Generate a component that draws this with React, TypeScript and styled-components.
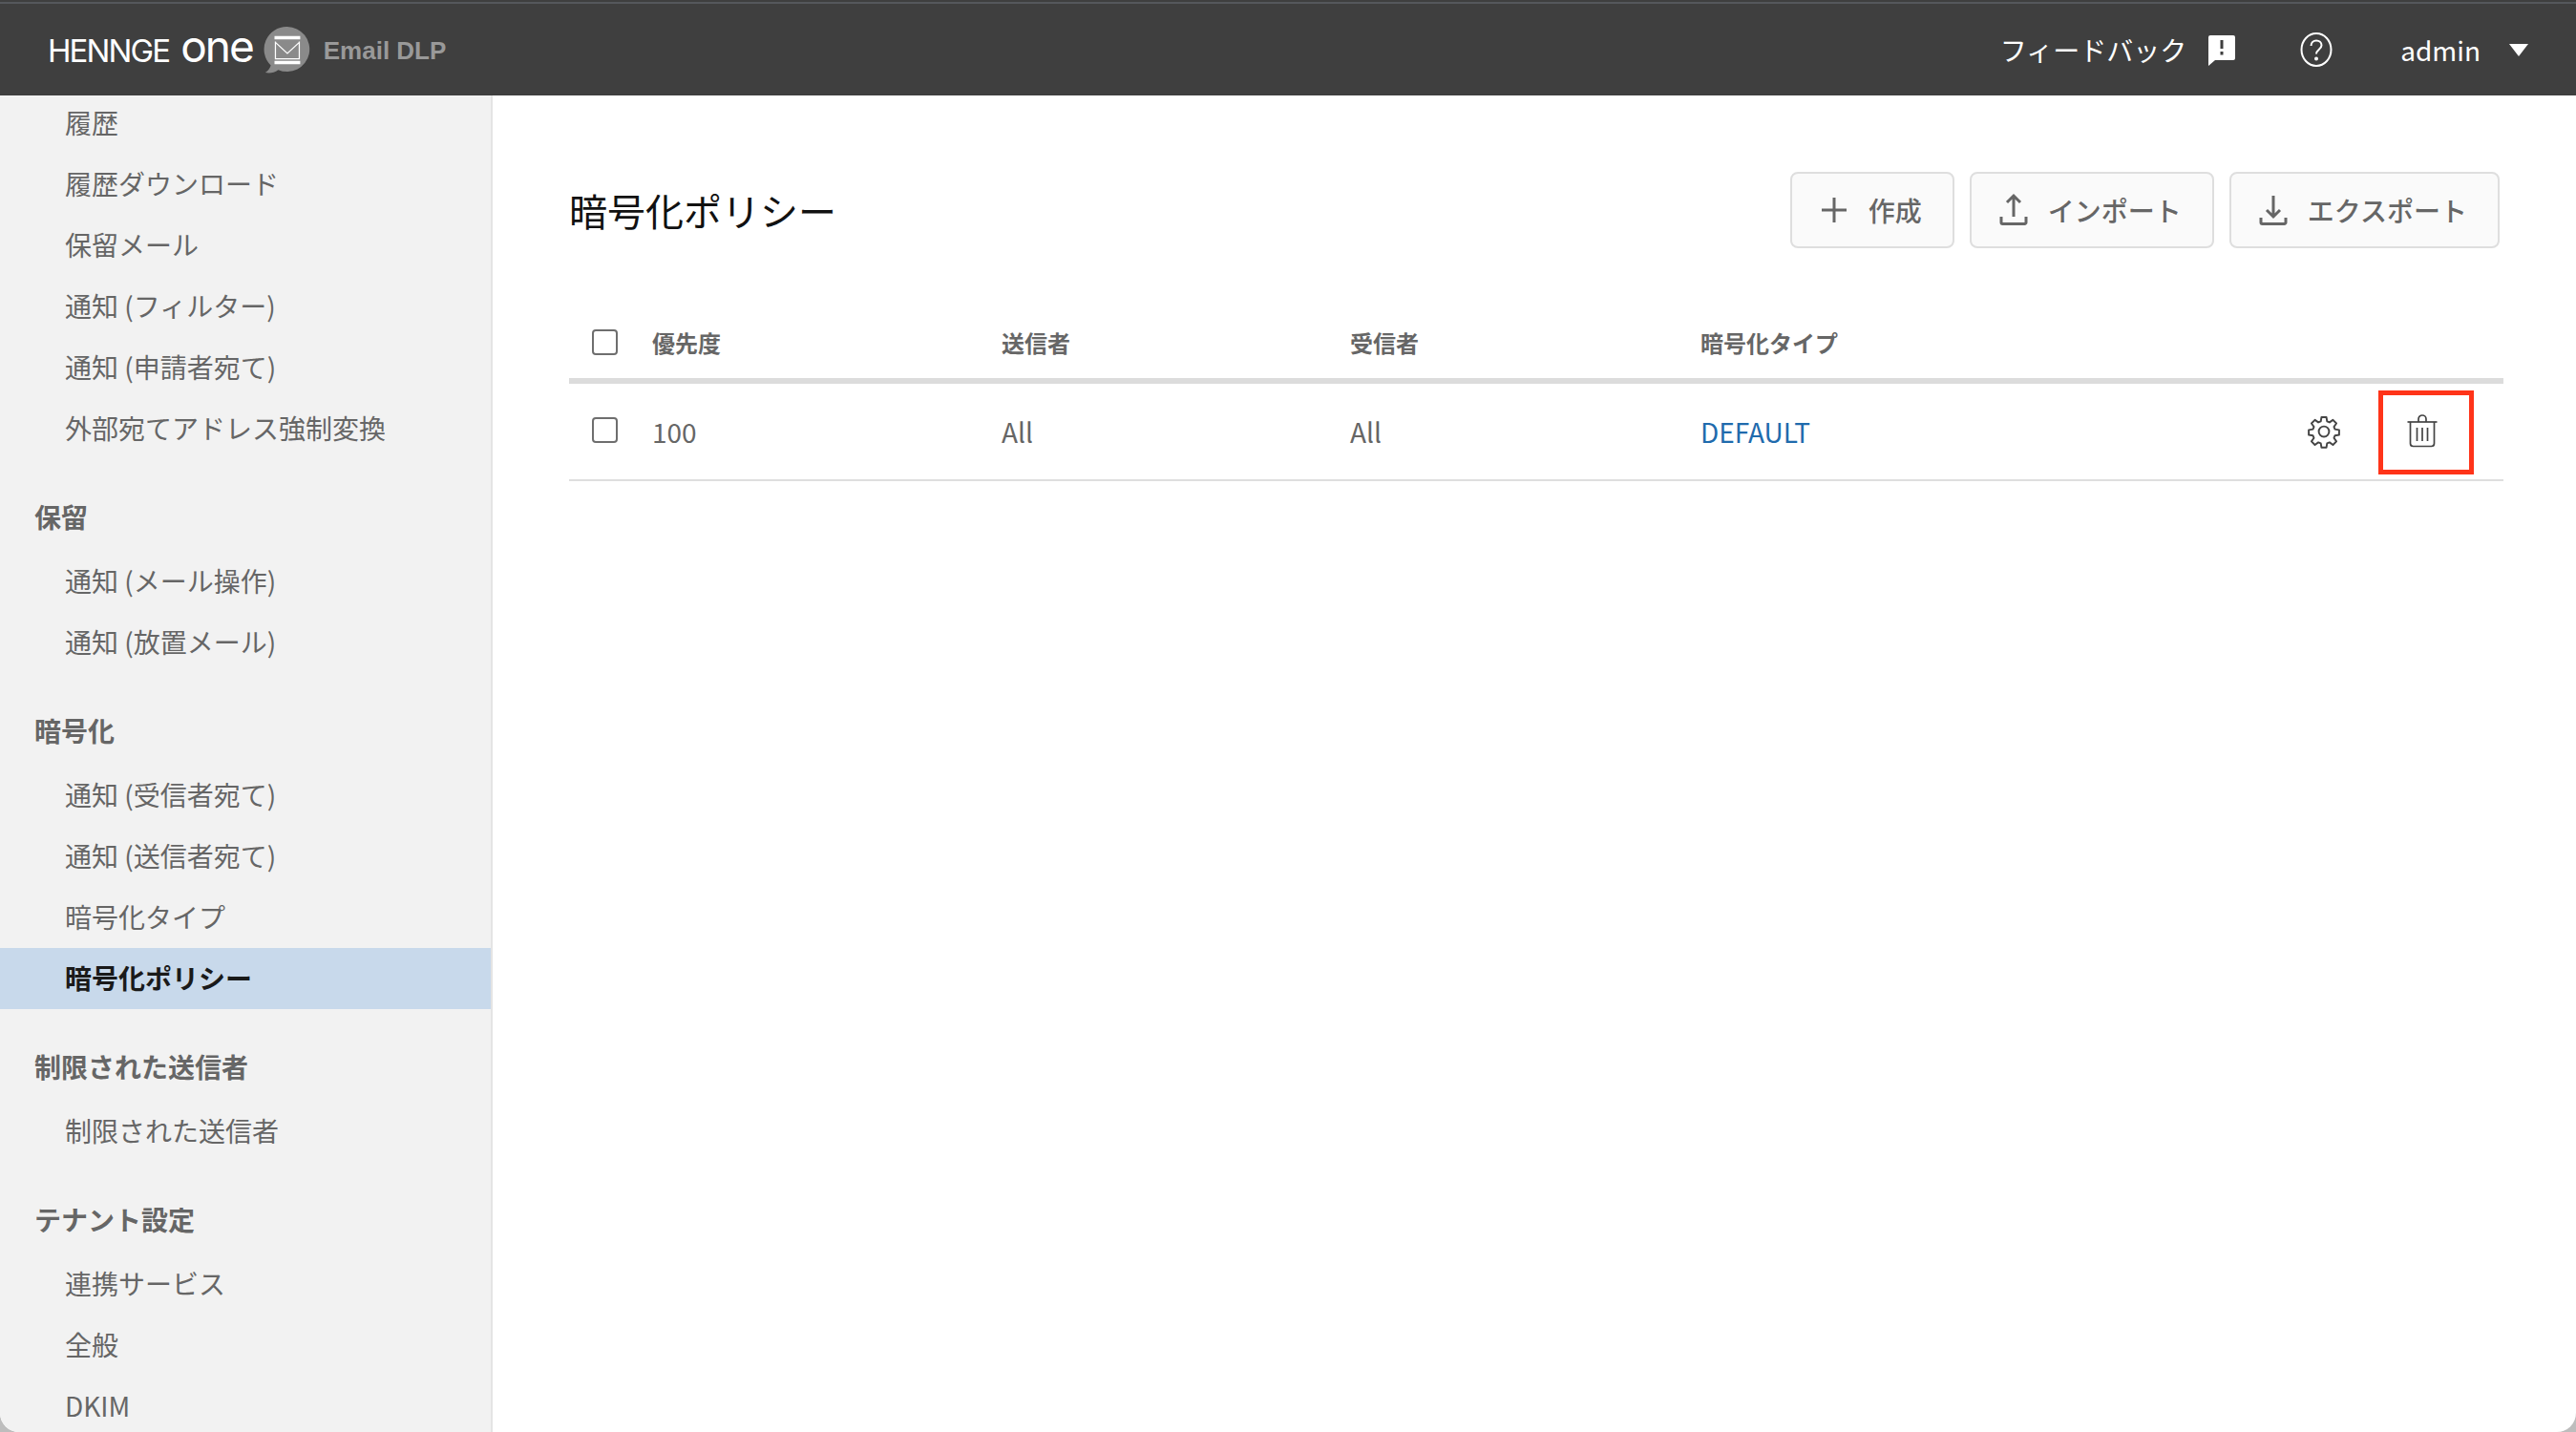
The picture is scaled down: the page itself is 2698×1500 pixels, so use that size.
import React from 'react';
import styled, { createGlobalStyle } from 'styled-components';

const Global = createGlobalStyle`
  html, body { margin: 0; padding: 0; background: #bdbdbd; }
  body { font-family: "Noto Sans CJK JP", "Noto Sans", sans-serif; }
  * { box-sizing: border-box; }
`;

const Screen = styled.div`
  width: 2698px;
  height: 1500px;
  display: flex;
  flex-direction: column;
  overflow: hidden;
  background: #fff;
  border-radius: 0 0 20px 20px;
`;

const TopBar = styled.header`
  flex: 0 0 100px;
  display: flex;
  align-items: center;
  background: #3f3f3f;
  border-top: 2px solid #3f3f3f;
  box-shadow: inset 0 2px 0 #55585c;
  padding: 2px 50px 0 50px;
  position: relative;
  z-index: 1;
`;

const Logo = styled.div`
  display: flex;
  align-items: center;
  margin-top: 2px;
`;

const Wordmark = styled.span`
  display: inline-block;
  white-space: nowrap;
  font-family: "Inter", "Liberation Sans", sans-serif;
  color: #fff;
  line-height: 50px;
`;

const Hennge = styled.span`
  font-size: 33px;
  letter-spacing: -1.9px;
`;

const One = styled.span`
  font-size: 46px;
  letter-spacing: -2px;
  margin-left: 12px;
`;

const Emblem = styled.svg`
  width: 50px;
  height: 52px;
  margin-left: 10px;
  flex: none;
`;

const Product = styled.span`
  font-family: "Liberation Sans", sans-serif;
  font-size: 26px;
  font-weight: 700;
  letter-spacing: 0;
  color: #999;
  margin-left: 14px;
`;

const TopActions = styled.div`
  margin-left: auto;
  display: flex;
  align-items: center;
  color: #fff;
`;

const FeedbackLabel = styled.span`
  font-size: 28px;
  line-height: 40px;
`;

const FeedbackIcon = styled.svg`
  width: 30px;
  height: 34px;
  margin-left: 22px;
`;

const HelpIcon = styled.svg`
  width: 34px;
  height: 36px;
  margin-left: 67px;
`;

const UserName = styled.span`
  font-size: 28px;
  line-height: 40px;
  margin-left: 71px;
`;

const Caret = styled.span`
  width: 0;
  height: 0;
  margin-left: 30px;
  border-left: 10px solid transparent;
  border-right: 10px solid transparent;
  border-top: 13px solid #fff;
`;

const Body = styled.div`
  flex: 1;
  display: flex;
  min-height: 0;
`;

const Sidebar = styled.nav`
  flex: 0 0 516px;
  background: #f2f2f2;
  border-right: 2px solid #e4e4e4;
  overflow: hidden;
`;

const NavList = styled.div`
  margin-top: -3px;
`;

const GroupTitle = styled.div`
  height: 96px;
  padding: 39px 0 15px 36px;
  font-size: 28px;
  line-height: 42px;
  font-weight: 700;
  color: #666;
`;

const NavItem = styled.a<{ $active?: boolean }>`
  display: block;
  height: 64px;
  padding-left: 68px;
  font-size: 28px;
  line-height: 62px;
  white-space: nowrap;
  font-weight: ${p => (p.$active ? 700 : 400)};
  color: ${p => (p.$active ? '#1a1a1a' : '#666')};
  background: ${p => (p.$active ? '#c8d9eb' : 'transparent')};
  margin-right: -1px;
`;

const Main = styled.main`
  flex: 1;
  padding: 80px 76px 0 80px;
  min-width: 0;
`;

const PageHead = styled.div`
  display: flex;
  align-items: center;
  justify-content: space-between;
  height: 80px;
  padding-right: 4px;
`;

const Title = styled.h1`
  margin: 0;
  font-size: 40px;
  line-height: 60px;
  font-weight: 400;
  color: #111;
`;

const Toolbar = styled.div`
  display: flex;
  gap: 16px;
`;

const ToolButton = styled.button`
  height: 80px;
  display: flex;
  align-items: center;
  gap: 21px;
  padding: 0 32px 0 29px;
  background: #fafafa;
  border: 2px solid #dedede;
  border-radius: 8px;
  color: #666;
  font-family: inherit;
  font-size: 28px;
  font-weight: 500;
  white-space: nowrap;
`;

const ToolIcon = styled.svg`
  width: 30px;
  height: 36px;
  flex: none;
`;

const Row = styled.div<{ $head?: boolean }>`
  display: grid;
  grid-template-columns: 87px 366px 365px 367px 1fr;
  align-items: center;
  height: ${p => (p.$head ? '81px' : '102px')};
  margin-top: ${p => (p.$head ? '61px' : '0')};
  border-bottom: ${p => (p.$head ? '6px solid #dcdcdc' : '2px solid #dedede')};
  color: #666;
  font-size: ${p => (p.$head ? '24px' : '28px')};
  font-weight: ${p => (p.$head ? 700 : 400)};
`;

const CheckCell = styled.div<{ $lift?: boolean }>`
  padding-left: 24px;
  padding-bottom: ${p => (p.$lift ? '3px' : '0')};
  display: flex;
`;

const Check = styled.span`
  width: 27px;
  height: 27px;
  border: 2px solid #6e6e6e;
  border-radius: 4px;
  background: #fff;
`;

const Cell = styled.div`
  white-space: nowrap;
`;

const Link = styled.a`
  color: #1f6bad;
`;

const EndWrap = styled.div`
  display: flex;
  align-items: center;
  justify-content: space-between;
`;

const RowActions = styled.div`
  display: flex;
  align-items: center;
  justify-content: flex-end;
  padding-right: 31px;
`;

const ActionIcon = styled.svg`
  width: 36px;
  height: 36px;
  color: #444;
`;

const DangerFrame = styled.div`
  width: 100px;
  height: 88px;
  margin: 2px 0 0 39px;
  border: 5px solid #ff3419;
  display: flex;
  align-items: center;
  justify-content: center;
  padding: 0 8px 3px 0;
`;

const groups: { title?: string; items: string[] }[] = [
  { items: ['履歴', '履歴ダウンロード', '保留メール', '通知 (フィルター)', '通知 (申請者宛て)', '外部宛てアドレス強制変換'] },
  { title: '保留', items: ['通知 (メール操作)', '通知 (放置メール)'] },
  { title: '暗号化', items: ['通知 (受信者宛て)', '通知 (送信者宛て)', '暗号化タイプ', '暗号化ポリシー'] },
  { title: '制限された送信者', items: ['制限された送信者'] },
  { title: 'テナント設定', items: ['連携サービス', '全般', 'DKIM'] },
];

const Gear = () => (
  <ActionIcon viewBox="0 0 24 24" fill="none" stroke="currentColor" strokeWidth="1.3" strokeLinejoin="round">
    <circle cx="12" cy="12" r="3.6" />
    <path d="M10.3 2h3.4l.5 2.9 1.7.7 2.4-1.7 2.4 2.4-1.7 2.4.7 1.7 2.9.5v3.4l-2.9.5-.7 1.7 1.7 2.4-2.4 2.4-2.4-1.7-1.7.7-.5 2.9h-3.4l-.5-2.9-1.7-.7-2.4 1.7-2.4-2.4 1.7-2.4-.7-1.7-2.9-.5v-3.4l2.9-.5.7-1.7-1.7-2.4 2.4-2.4 2.4 1.7 1.7-.7z" />
  </ActionIcon>
);

const Trash = () => (
  <ActionIcon viewBox="0 0 36 36" fill="none" stroke="currentColor" strokeWidth="1.7">
    <path d="M2.500 8h31" />
    <path d="M14 8V5a4 4 0 0 1 8 0v3" />
    <path d="M5.500 8v22.500a3 3 0 0 0 3 3h19a3 3 0 0 0 3-3V8" />
    <path d="M12.500 14v14M18 14v14M23.500 14v14" />
  </ActionIcon>
);

export default function App() {
  return (
    <Screen>
      <Global />
      <TopBar>
        <Logo>
          <Wordmark>
            <Hennge>HENNGE</Hennge>
            <One>one</One>
          </Wordmark>
          <Emblem viewBox="0 0 52 54">
            <path d="M27 1a24.500 24.500 0 1 1-10 47c-4 3-9 4-14 3 3-2 5-5 6-8A24.500 24.500 0 0 1 27 1z" fill="#8a8a8a" />
            <path d="M13 13h28M13 40h28" stroke="#fff" strokeWidth="3.500" />
            <path d="M14 17v19h26V17M14 18l13 12 13-12" stroke="#fff" strokeWidth="1.300" fill="none" />
          </Emblem>
          <Product>Email DLP</Product>
        </Logo>
        <TopActions>
          <FeedbackLabel>フィードバック</FeedbackLabel>
          <FeedbackIcon viewBox="0 0 30 34">
            <path d="M3 2h24a2 2 0 0 1 2 2v22a2 2 0 0 1-2 2H8l-7 6V4a2 2 0 0 1 2-2z" fill="#fff" />
            <rect x="13.500" y="7" width="3" height="9" fill="#3f3f3f" />
            <rect x="13.500" y="19" width="3" height="3.500" fill="#3f3f3f" />
          </FeedbackIcon>
          <HelpIcon viewBox="0 0 34 36" fill="none" stroke="#fff" strokeWidth="2">
            <ellipse cx="17" cy="18" rx="15.500" ry="17" />
            <path d="M11.500 14c0-3.500 2.500-5.500 5.500-5.500s5.500 2 5.500 5c0 4-5.500 4.500-5.500 9" />
            <circle cx="17" cy="27.500" r="1" fill="#fff" />
          </HelpIcon>
          <UserName>admin</UserName>
          <Caret />
        </TopActions>
      </TopBar>
      <Body>
        <Sidebar>
          <NavList>
            {groups.map((g, i) => (
              <div key={i}>
                {g.title && <GroupTitle>{g.title}</GroupTitle>}
                {g.items.map(item => (
                  <NavItem key={item} $active={item === '暗号化ポリシー'}>{item}</NavItem>
                ))}
              </div>
            ))}
          </NavList>
        </Sidebar>
        <Main>
          <PageHead>
            <Title>暗号化ポリシー</Title>
            <Toolbar>
              <ToolButton>
                <ToolIcon viewBox="0 0 30 36" fill="none" stroke="#666" strokeWidth="3">
                  <path d="M15 5v26M2 18h26" />
                </ToolIcon>
                作成
              </ToolButton>
              <ToolButton>
                <ToolIcon viewBox="0 0 30 36" fill="none" stroke="#666" strokeWidth="3">
                  <path d="M15 25V3M8 10l7-7 7 7M2 25v6a1.500 1.500 0 0 0 1.500 1.500h23A1.500 1.500 0 0 0 28 31v-6" />
                </ToolIcon>
                インポート
              </ToolButton>
              <ToolButton>
                <ToolIcon viewBox="0 0 30 36" fill="none" stroke="#666" strokeWidth="3">
                  <path d="M15 3v22M8 18l7 7 7-7M2 26v5a1.500 1.500 0 0 0 1.500 1.500h23A1.500 1.500 0 0 0 28 31v-5" />
                </ToolIcon>
                エクスポート
              </ToolButton>
            </Toolbar>
          </PageHead>
          <Row $head>
            <CheckCell><Check /></CheckCell>
            <Cell>優先度</Cell>
            <Cell>送信者</Cell>
            <Cell>受信者</Cell>
            <Cell>暗号化タイプ</Cell>
          </Row>
          <Row>
            <CheckCell $lift><Check /></CheckCell>
            <Cell>100</Cell>
            <Cell>All</Cell>
            <Cell>All</Cell>
            <EndWrap>
              <Link>DEFAULT</Link>
              <RowActions>
                <Gear />
                <DangerFrame><Trash /></DangerFrame>
              </RowActions>
            </EndWrap>
          </Row>
        </Main>
      </Body>
    </Screen>
  );
}
